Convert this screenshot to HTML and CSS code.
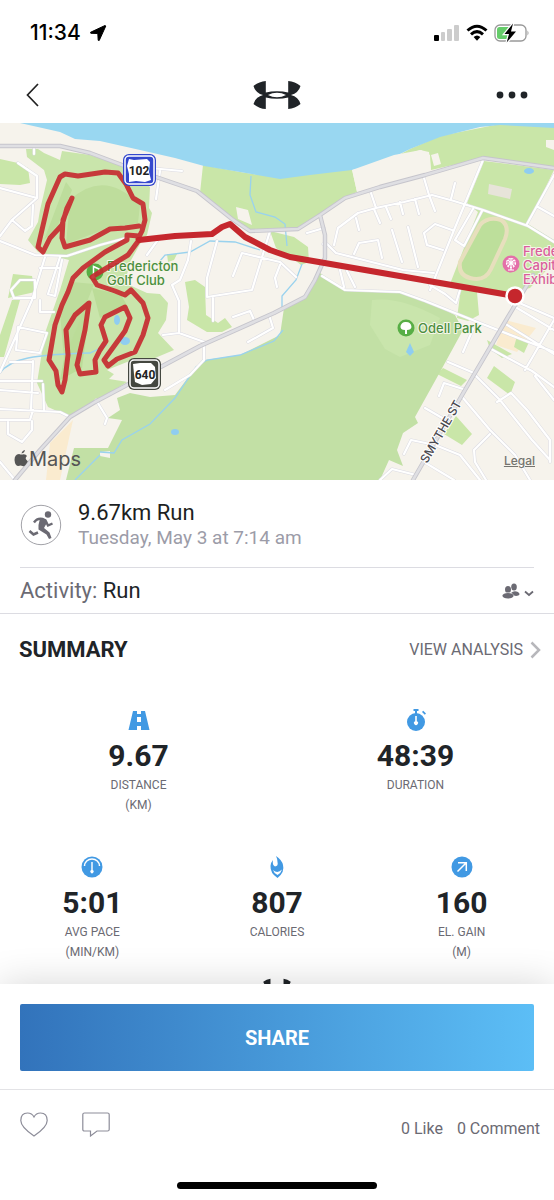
FILE: index.html
```html
<!DOCTYPE html>
<html lang="en">
<head>
<meta charset="utf-8">
<meta name="viewport" content="width=device-width, initial-scale=1">
<title>9.67km Run</title>
<link rel="stylesheet" href="styles.css">
</head>
<body>
<div class="app">
  <div class="status">
    <div class="status-left">
      <span class="clock">11:34</span>
      <svg width="18" height="18" viewBox="0 0 18 18" aria-hidden="true"><path d="M16 1.500 1.500 8.300 1.800 9.300 8.800 9.500 9.200 16.300 10.200 16.500 16.800 2z" stroke="#000" stroke-linejoin="round"/></svg>
    </div>
    <div class="status-right">
      <svg width="26" height="18" viewBox="0 0 26 18" aria-hidden="true"><rect x="0" y="11" width="5" height="6" rx="1"/><g fill="#ccc"><rect x="7" y="8" width="4" height="9" rx="1"/><rect x="13" y="5" width="5" height="12" rx="1"/><rect x="20" y="1" width="5" height="16" rx="1"/></g></svg>
      <svg width="22" height="18" viewBox="0 0 22 18" aria-hidden="true"><g fill="none" stroke="#000" stroke-width="3"><path d="M1.500 6.500q9.500-8.500 19 0"/><path d="M5 10.300q6-5.400 12 0"/></g><path d="M7.600 13q3.400-3 6.800 0L11 16.800z"/></svg>
      <svg width="36" height="20" viewBox="0 0 36 20" aria-hidden="true"><rect x="1" y="2" width="31" height="16" rx="5" fill="none" stroke="#999" stroke-width="1.300"/><path d="M33.500 7.500q2 2.500 0 5z" fill="#999"/><path d="M5.500 4H17v12H5.500Q3 16 3 13.500v-7Q3 4 5.500 4z" fill="#65cc6a"/><path d="M19 .5 10.500 11H15l-2.300 8.500L22 8.500h-5z" stroke="#fff" stroke-width="2.500" paint-order="stroke"/></svg>
    </div>
  </div>

  <header class="topbar">
    <button class="icon-btn" aria-label="Back"><svg width="13" height="24" viewBox="0 0 13 24"><path d="M12 1 1.500 12 12 23" fill="none" stroke="#222" stroke-width="1.700"/></svg></button>
    <svg class="logo" width="48" height="30" viewBox="0 0 48 30" role="img" aria-label="Under Armour">
      <path id="ua" d="M12.800 1V12.600Q18 11.300 24 11.300T35.200 12.600V1Q42 1.500 47.500 6 45.500 13 38 15 45.500 17 47.500 24 42 28.500 35.200 29V17.400Q30 18.700 24 18.700T12.800 17.400V29Q6 28.500.5 24 2.500 17 10 15 2.500 13 .5 6 6 1.500 12.800 1zM15 15Q19 17.300 24 17.300T33 15Q29 12.700 24 12.700T15 15z" fill="#202428" fill-rule="evenodd"/>
    </svg>
    <button class="icon-btn" aria-label="More"><svg width="32" height="8" viewBox="0 0 32 8" fill="#202428"><circle cx="4" cy="4" r="3.400"/><circle cx="16" cy="4" r="3.400"/><circle cx="28" cy="4" r="3.400"/></svg></button>
  </header>

  <main class="content">
    <section class="map" aria-label="Route map">
      <svg class="map-art" viewBox="0 123 554 357" preserveAspectRatio="xMidYMid slice">
        <defs>
          <path id="streets" d="M0 241 35 255 67 256 100 245 126 238M0 188 37 198M18 163 37 176V198L12 220 0 236M12 220 25 231 32 226 33 205M34 148V154M160 171 156 199M150 168 182 171M45 257 32 300 0 372M60 257 48 294 55 296 62 260M40 268H60M20 280H35V298H14L11 290zM157 241 147 255M191 241 188 260 180 280 172 285 179 301 179 333 207 343M217 241 207 278 207 297 252 290 270 231M213 298V321M233 276 242 253 280 262 296 277M280 265 275 278 277 287M179 333 163 335M233 317 250 311 254 320M269 315 273 328 248 342M204 346V360L190 375 165 390M96 400 107 418 105 424M18 327 47 333 40 353 16 350zM40 300V312H54M0 381H42M0 390 38 393M33 361 31 410M10 362H33M43 384 44 410M0 409 60 412 70 417M0 420H30L33 410M8 422V434L22 442 32 430V421M0 462 15 480M323 244 327 244 336 253 403 270 434 273M334 245 338 228 358 213 376 208 404 202 432 195 454 201 483 210 528 226 554 242M371 193 376 208M424 178 429 195 435 211M455 183 451 199M356 218 359 230M374 209 380 223M386 207 391 219M400 202 403 214M415 199 419 214M392 230 402 262M408 227 418 267M354 254 359 243 378 240 382 258M452 230 435 224 424 233 427 245 443 250M483 160 454 230 430 290M473 209 455 240 464 246 482 211M307 233 324 228M322 276 345 290 400 292 425 301 480 323 554 352M340 270 344 287M347 271 355 287M430 285 445 294 456 303 460 290M463 352 473 329M554 175 527 224M538 207 554 216M517 302 554 318M491 349 532 371 554 387M448 362 474 373M439 396 444 383 463 389M425 408 444 419M404 454 411 440 435 445 460 455 480 480M474 374 500 400 532 440 550 460M463 398 490 430 515 455 530 480M490 434 474 450 475 462 486 480M497 402 511 393 527 410 550 440V462M525 370 554 320M535 376 554 400M380 480 392 469 416 475M424 462 454 480M504 323 554 354M512 305 554 330"/>
          <path id="roads" d="M0 146H60L90 153 122 165 150 175 197 191 232 219 250 231 298 229 320 215 345 198 380 187 425 175 483 158 554 168M320 215 325 235 325 258 315 280 305 297 274 313 200 346 95 402 70 417 40 450 15 480M533 275 505 322 465 390 413 480"/>
        </defs>
        <rect y="123" width="554" height="357" fill="#f6f3ec"/>
        <g fill="#c9e6a8">
          <path d="M203 165 240 172 280 178 352 169 357 192 345 197 322 214 298 229 250 231 232 219 200 193z"/>
          <path d="M390 160 410 149 440 136 500 124 554 127V167L483 158 431 170 429 152 420 150z"/>
          <path d="M484 161 554 170 528 224 554 240V262L530 288 505 294 450 284 478 212 467 203z"/>
          <path d="M0 159 18 163 28 168 30 183 20 185 0 184z"/>
          <path d="M13 274 32 276 35 292 8 298zM12 300H20L4 357H0V335z"/>
          <path d="M185 282 195 280 205 287 206 315 218 323 225 318 232 327 222 332 207 332 187 320 189 307z"/>
          <path d="M167 254 177 254 174 260 168 262zM270 231 294 237 308 247 309 262 301 265 292 258 276 248z"/>
          <path d="M461 288 477 292 479 315 468 321 457 318zM494 366 515 382 510 395 487 378zM443 368 467 380 461 386 437 374zM456 416 472 434 462 445 444 434zM487 340 512 354 502 358 490 349z"/>
        </g>
        <path d="M26 149 38 149 44 153 60 160 62 151 90 155 122 166 150 187 149 208 152 213 147 235 140 244 130 262 125 283 147 293 160 294 168 303 166 320 158 333 174 350 155 358 132 360 107 370 127 382 95 402 70 417 48 407 37 383 45 333 60 290 69 260 38 252 28 240 38 222 40 210 47 180 44 170 27 157z" fill="#c9e5ab"/>
        <path d="M320 273 345 290 400 292 425 300 455 315 463 330 440 372 415 417 418 423 403 433 397 450 403 466 389 460 380 480H66L74 448H108L122 420 108 418 120 410 117 398 130 393 150 397 175 395 190 375 205 360 240 355 280 335 284 308 305 297z" fill="#c2e0a5"/>
        <path d="M372 300Q400 296 440 318L430 345 400 357 385 349 370 325z" fill="#c9e5ac"/>
        <path d="M70 200Q104 168 140 205L138 223 108 228 66 244z" fill="#bedd9c"/>
        <path d="M73 310 91 300 82 368 60 380zM92 288 121 295 128 307 100 318z" fill="#bbdc98"/>
        <path d="M60 312 72 282 94 284 64 360zM44 240 66 182 72 190 58 225z" fill="#bddd9c"/>
        <path d="M20 123 60 132 75 139 100 141 140 150 175 158 204 166 240 172 280 179 310 175 352 170 380 164 410 149 440 137 480 127 500 125 554 128V123z" fill="#99d7f1"/>
        <path d="M352 170 394 155 421 150 430 155 431 172 357 192zM431 155 438 153 441 164 434 166zM546 140H554V150L546 147zM236 207 248 210 252 225 238 219z" fill="#f6f3ec"/>
        <path d="M489 184 512 189 510 199 488 194z" fill="#e7e4d9"/>
        <path d="M50 443 73 420 60 480H46zM505 320 536 328 517 352 496 345z" fill="#faebcf"/>
        <path d="M517 336 529 342 524 353 514 347z" fill="#c9e6a8"/>
        <path d="M109 379 122 366 137 376 128 382zM100 452 110 451 110 458 100 456zM367 278 390 275 386 282 376 290 367 288z" fill="#f6f3ec"/>
        <path fill="none" stroke="#99d2ee" stroke-width="1.300" d="M0 373Q8 362 28 358T90 353L107 345M160 261 165 255 190 252 210 241 235 242 260 250M302 264 296 280 282 296 282 308M283 330 274 341 240 355 207 360 196 367 175 398 150 424 122 440 114 453 100 452M100 455 75 480M251 176 250 195 256 212 275 217 285 224 287 246"/>
        <g fill="#8fcdf0"><ellipse cx="117" cy="320" rx="3" ry="5"/><ellipse cx="125" cy="341" rx="5" ry="4"/><ellipse cx="175" cy="432" rx="4" ry="3"/><path d="M410 343 414 352 410 356 406 352z"/><ellipse cx="529" cy="171" rx="5" ry="3"/></g>

        <g fill="none" stroke-linejoin="round" stroke-linecap="round">
          <use href="#streets" stroke="#dcdce3" stroke-width="3.200"/>
          <use href="#streets" stroke="#fff" stroke-width="2.200"/>
          <use href="#roads" stroke="#c6c5cc" stroke-width="4.400"/>
          <use href="#roads" stroke="#dfdfe3" stroke-width="2.600"/>
        </g>
        <path d="M480 225Q488 216 501 220 510 226 505 239L491 269Q485 282 470 278 458 275 460 262z" fill="#bddf9b" stroke="#e7dfbd" stroke-width="4"/>

        <g class="map-label label-green">
          <circle cx="95" cy="272" r="8.500" fill="#58ae46"/>
          <path d="M93.500 277V266.500L99 269V272" fill="none" stroke="#fff" stroke-width="1.500"/><circle cx="93" cy="277" r="1.800" fill="#fff"/>
          <text x="107" y="271">Fredericton</text><text x="107" y="285">Golf Club</text>
          <circle cx="406" cy="328" r="8.500" fill="#58ae46"/>
          <path d="M405 334V330Q400 330 400.500 326 402 321.500 406 322 411 322 411.500 327 411 330 407 330V334z" fill="#fff"/>
          <text x="418" y="333">Odell Park</text>
        </g>
        <g class="map-label label-pink">
          <circle cx="511" cy="264" r="8.500" fill="#e46fa9"/>
          <g fill="none" stroke="#fff" stroke-width="1.200"><circle cx="511" cy="263" r="4.500" stroke-dasharray="2 1"/><path d="M511 258V270M506 263H516M508 260 514 266M514 260 508 266M508 270H514"/></g>
          <text x="523" y="256">Fredericton</text><text x="523" y="270">Capital</text><text x="523" y="284">Exhibition</text>
        </g>
        <text class="street-name" transform="translate(427 464) rotate(-60)">SMYTHE ST</text>

        <g fill="none" stroke="#c5272d" stroke-linecap="round" stroke-linejoin="round">
          <path stroke-width="5" opacity=".9" d="M43 252 38 247 48 204 60 177 65 174 78 176 105 172 118 173 126 184 133 198 143 204 145 220 142 231 138 239M139 226 125 228 110 229 90 240 65 247 62 238 63 220 72 198 67 208 62 225 50 238 43 252M139 240 128 255 100 272 92 277 97 285 115 291 125 295 131 290 143 303 148 318 143 335 135 352 117 359 108 366 104 360 125 331 130 318 125 307 105 317 101 325 106 341 100 350 95 360 96 372 80 374 77 365 85 330 89 303 75 315 66 330 68 355 65 380 62 392 58 385 56 371 49 360 55 325 62 305 68 292 73 278 83 268 105 252 127 240V235L139 236"/>
          <path d="M139 240 175 236 212 234 222 227 230 224 245 237 270 250 290 257 515 296" stroke-width="6"/>
        </g>
        <circle cx="515" cy="296" r="8.500" fill="#c5272d" stroke="#fff" stroke-width="2.500"/>

        <g text-anchor="middle" class="shield">
          <rect x="123" y="154" width="33" height="32" rx="6" fill="#3448cd"/><rect x="125" y="156" width="29" height="28" rx="4" fill="none" stroke="#fff" stroke-width="1.500"/>
          <path d="M129 159 134 160 147 159 150 162 149 172 151 180 145 182 136 181 129 182 129 174 127 166z" fill="#fff"/><text x="139" y="175">102</text>
          <rect x="128" y="358" width="33" height="32" rx="6" fill="#444740"/><rect x="130" y="360" width="29" height="28" rx="4" fill="none" stroke="#fff" stroke-width="1.500"/>
          <path d="M133 364 140 363 151 363 155 367 156 378 151 384 142 385 135 382 134 374z" fill="#fff"/><text x="145" y="379">640</text>
        </g>
        <path d="M25 450q-.5 3-3.500 3.500.5-3 3.500-3.500zM27 456q-3 2.500.8 5.200Q25 467 22.500 466q-2-1-4 0Q15 466 14.500 460q0-5.500 4.500-6 3 1 4.500.2Q26 454 27 456z" fill="#555"/>
        <text class="map-brand" x="29" y="466">Maps</text>
      </svg>
      <a class="legal" href="#legal">Legal</a>
    </section>

    <section class="workout">
      <svg width="42" height="42" viewBox="0 0 42 42" aria-hidden="true"><circle cx="21" cy="21" r="19.700" fill="#fff" stroke="#a2a2a8"/><circle cx="28" cy="10.500" r="3.200" fill="#6b6a73"/><path d="M14 18.500Q17 14 22.500 15L25.500 16.500 28 21.500 32.500 19.500" fill="none" stroke="#6b6a73" stroke-width="2.400"/><path d="M20 14.500 25.500 15.500 26.500 19.500 24 24 29.500 28.500 31.500 34 29 35 26.500 30.500 18.500 25.500 18.500 21z" fill="#6b6a73"/><path d="M9.500 27 13.500 30.500 18 28.500" fill="none" stroke="#6b6a73" stroke-width="2.600"/></svg>
      <div>
        <h1 class="workout-title">9.67km Run</h1>
        <p class="workout-date">Tuesday, May 3 at 7:14 am</p>
      </div>
    </section>

    <section class="activity">
      <p class="activity-text">Activity: <span class="activity-value">Run</span></p>
      <button class="icon-btn" aria-label="Privacy: friends"><svg width="32" height="18" viewBox="0 0 32 18"><g fill="#6b6a73"><ellipse cx="12" cy="5" rx="2.800" ry="3.500"/><path d="M9 11Q12 8 16 10 20 13 14 14L10 13z"/><g stroke="#fff" stroke-width="1" paint-order="stroke"><ellipse cx="6" cy="7.500" rx="3" ry="3.500"/><ellipse cx="6" cy="13.800" rx="5.600" ry="2.800"/></g></g><path d="M23 9.500 27 13 31 9.500" fill="none" stroke="#6b6a73" stroke-width="1.800"/></svg></button>
    </section>

    <section class="summary">
      <div class="summary-head">
        <h2 class="summary-title">SUMMARY</h2>
        <a class="analysis" href="#analysis">VIEW ANALYSIS <svg width="11" height="18" viewBox="0 0 11 18" aria-hidden="true"><path d="M1.500 1.500 9 9 1.500 16.500" fill="none" stroke="#b7b7bb" stroke-width="2.500"/></svg></a>
      </div>
      <div class="stats stats-two">
        <div class="stat">
          <svg width="22" height="22" viewBox="0 0 22 22"><path d="M5 2H9V5H13V2H17L21.500 21H13V17H9V21H.500z" fill="#4199e3"/><path d="M9 8H13V13H9z" fill="#fff"/></svg>
          <strong class="stat-value">9.67</strong><span class="stat-label">DISTANCE<br>(KM)</span>
        </div>
        <div class="stat">
          <svg width="22" height="22" viewBox="0 0 22 22"><g fill="#4199e3"><circle cx="11" cy="13" r="9"/><path d="M8.500 0H13.500V2H12V5H10V2H8.500zM17 3 18.200 1.800 21 4.600 19.800 5.800z"/></g><path d="M10.200 7H11.800V12.200A2 2 0 1 1 10.200 12.200z" fill="#fff"/></svg>
          <strong class="stat-value">48:39</strong><span class="stat-label">DURATION</span>
        </div>
      </div>
      <div class="stats stats-three">
        <div class="stat">
          <svg width="22" height="22" viewBox="0 0 22 22"><circle cx="11" cy="11" r="10.500" fill="#4199e3"/><path d="M3.500 10A7.500 7 0 0 1 18.500 10" fill="none" stroke="#fff" stroke-width="1.500"/><path d="M10.300 6H11.700V14A1.700 1.700 0 1 1 10.300 14z" fill="#fff"/></svg>
          <strong class="stat-value">5:01</strong><span class="stat-label">AVG PACE<br>(MIN/KM)</span>
        </div>
        <div class="stat">
          <svg width="22" height="22" viewBox="0 0 22 22"><path d="M10 0Q16 4 17 9 19 16 11.500 22 4 17 4.500 10 5 6 7 4 6 9 9 10.500 12.500 10 11.500 6 11.500 3 10 0z" fill="#4199e3"/><path d="M7 14Q11.500 18 16 13.500 15 17 11.500 19 8 17.500 7 14z" fill="#fff"/></svg>
          <strong class="stat-value">807</strong><span class="stat-label">CALORIES</span>
        </div>
        <div class="stat">
          <svg width="22" height="22" viewBox="0 0 22 22"><circle cx="11" cy="11" r="10.500" fill="#4199e3"/><path d="M6.500 15.500 15 7M7 6.700H15.300V15" fill="none" stroke="#fff" stroke-width="1.500"/></svg>
          <strong class="stat-value">160</strong><span class="stat-label">EL. GAIN<br>(M)</span>
        </div>
      </div>
      <svg class="end-logo" width="28" height="18" viewBox="0 0 48 30" aria-hidden="true"><use href="#ua"/></svg>
    </section>
  </main>

  <footer class="sheet">
    <div class="share-row"><button class="share">SHARE</button></div>
    <div class="social">
      <button class="icon-btn" aria-label="Like"><svg width="28" height="25" viewBox="0 0 28 25"><path d="M14 24Q.8 15 .8 8.500.800 1 7.500 1 12 1 14 5 16 1 20.500 1 27.200 1 27.200 8.500 27.200 15 14 24z" fill="none" stroke="#8d8d99" stroke-width="1.200"/></svg></button>
      <button class="icon-btn" aria-label="Comment"><svg width="28" height="25" viewBox="0 0 28 25"><path d="M2.500 1H25.500Q27.200 1 27.200 2.500V17.500Q27.200 19 25.500 19H15L8.500 24V19H2.500Q.8 19 .8 17.500V2.500Q.8 1 2.500 1z" fill="none" stroke="#8d8d99" stroke-width="1.200"/></svg></button>
      <p class="counts"><span>0 Like</span><span>0 Comment</span></p>
    </div>
    <div class="home-bar"></div>
  </footer>
</div>
</body>
</html>
```
FILE: styles.css
```css
* { box-sizing: border-box; }
body, h1, h2, p { margin: 0; }
body {
  background: #fff;
  color: #202428;
  font-family: Roboto, "Liberation Sans", sans-serif;
}
svg { display: block; flex: none; }
.app {
  display: flex;
  flex-direction: column;
  height: 100vh;
}
.icon-btn {
  display: flex;
  padding: 0;
  border: 0;
  background: none;
  cursor: pointer;
}
.status {
  display: flex;
  flex: none;
  justify-content: space-between;
  align-items: center;
  height: 66px;
  padding: 0 24px 0 30px;
  color: #000;
}
.status-left { display: flex; align-items: center; gap: 8px; }
.status-right { display: flex; align-items: center; gap: 6px; }
.clock { font: 500 21px/24px Inter, sans-serif; }
.topbar {
  display: flex;
  flex: none;
  justify-content: space-between;
  align-items: center;
  height: 57px;
  padding: 0 26px;
}
.topbar .icon-btn { width: 32px; }
.content {
  flex: 1;
  min-height: 0;
  overflow: hidden;
}
.map { position: relative; }
.map-art { width: 100%; height: auto; }
.map-label { font: 500 13px Inter, sans-serif; }
.map-label text {
  stroke: #f6f6ea;
  stroke-width: 2px;
  stroke-linejoin: round;
  paint-order: stroke;
}
.label-green text { fill: #4c8f40; }
.label-pink text { fill: #d95f9b; }
.street-name {
  font: 500 12px Inter, sans-serif;
  fill: #4a4a50;
  stroke: #fff;
  stroke-width: 2px;
  paint-order: stroke;
}
.shield { font: 700 12px Roboto, sans-serif; fill: #222; }
.map-brand { font: 400 20px Inter, sans-serif; fill: #555; }
.legal {
  position: absolute;
  right: 19px;
  bottom: 11px;
  color: #74746f;
  font: 500 12px/16px Inter, sans-serif;
}
.workout {
  display: flex;
  align-items: center;
  gap: 16px;
  height: 88px;
  padding-top: 2px;
  margin: 0 20px;
  border-bottom: 1px solid #dcdce2;
}
.workout-title {
  font-size: 22px;
  line-height: 26px;
  font-weight: 400;
  color: #1d1f22;
}
.workout-date {
  font-size: 19px;
  line-height: 24px;
  font-weight: 400;
  color: #9c9ca8;
}
.activity {
  display: flex;
  justify-content: space-between;
  align-items: center;
  height: 46px;
  padding: 0 20px;
  border-bottom: 1px solid #dcdce2;
}
.activity-text { font-size: 22px; line-height: 26px; color: #6b6a73; font-weight: 400; }
.activity-value { color: #202428; }
.summary { padding: 22px 0 0; }
.summary-head {
  display: flex;
  justify-content: space-between;
  align-items: center;
  padding: 0 13px 0 19px;
}
.summary-title { font-size: 22px; line-height: 28px; font-weight: 700; }
.analysis {
  display: flex;
  align-items: center;
  gap: 7px;
  color: #6b6a73;
  font-size: 16px;
  line-height: 24px;
  text-decoration: none;
}
.stats { display: grid; }
.stats-two { grid-template-columns: 1fr 1fr; padding-top: 45px; }
.stats-three { grid-template-columns: 1fr 1fr 1fr; padding-top: 41px; }
.stat {
  display: flex;
  flex-direction: column;
  align-items: center;
}
.stat-value { margin: 8px 0 2px; font-size: 30px; line-height: 34px; font-weight: 700; }
.stat-label {
  color: #6b6a73;
  font-size: 12px;
  line-height: 20px;
  text-align: center;
}
.end-logo { margin: 16px auto 0; }
.sheet {
  position: relative;
  flex: none;
  background: #fff;
  box-shadow: 0 0 36px rgba(0, 0, 0, .16);
}
.share-row { padding: 20px 20px 18px; border-bottom: 1px solid #e3e3e6; }
.share {
  display: block;
  width: 100%;
  height: 67px;
  border: 0;
  border-radius: 2px;
  background: linear-gradient(90deg, #3273bb, #5cbef6);
  color: #fff;
  font: 700 20px/24px Roboto, sans-serif;
  cursor: pointer;
}
.social {
  display: flex;
  align-items: center;
  gap: 34px;
  height: 68px;
  padding: 0 14px 0 20px;
}
.counts {
  display: flex;
  gap: 14px;
  margin-left: auto;
  padding-top: 10px;
  color: #6b6a73;
  font-size: 16px;
  line-height: 20px;
}
.home-bar {
  width: 36%;
  height: 7px;
  margin: 24px auto 11px;
  border-radius: 4px;
  background: #000;
}
```
